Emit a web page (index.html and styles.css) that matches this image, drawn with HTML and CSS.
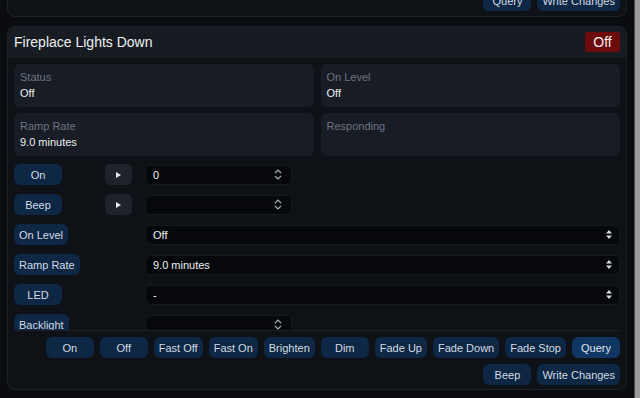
FILE: index.html
```html
<!DOCTYPE html>
<html>
	<head>
		<meta charset="UTF-8">
		<title>Fireplace Lights Down</title>
		<link rel="stylesheet" href="styles.css">
	</head>
	<body>
		<div class="screen">
		<div class="main">
			<div class="card card-prev">
				<div class="actions">
					<button class="btn">Query</button>
					<button class="btn">Write Changes</button>
				</div>
			</div>
			<div class="card">
				<div class="card-head">
					<span class="title">Fireplace Lights Down</span>
					<span class="badge">Off</span>
				</div>
				<div class="card-body">
					<div class="info">
						<div class="info-box">
							<div class="info-label">Status</div>
							<div class="info-value">Off</div>
						</div>
						<div class="info-box">
							<div class="info-label">On Level</div>
							<div class="info-value">Off</div>
						</div>
						<div class="info-box">
							<div class="info-label">Ramp Rate</div>
							<div class="info-value">9.0 minutes</div>
						</div>
						<div class="info-box">
							<div class="info-label">Responding</div>
						</div>
					</div>
					<div class="controls">
						<div class="ctl-row">
							<div class="ctl-name"><button class="btn">On</button></div>
							<button class="play"><svg width="5" height="6" viewBox="0 0 5 6"><path d="M0 0L5 3L0 6Z" fill="#e8e8e8"/></svg></button>
							<div class="field field-num">
								<span>0</span>
								<svg class="spin" width="8" height="11" viewBox="0 0 8 11"><path d="M1 4L4 1L7 4M1 7L4 10L7 7" fill="none" stroke="#a9aeb5" stroke-width="1.2"/></svg>
							</div>
						</div>
						<div class="ctl-row">
							<div class="ctl-name"><button class="btn">Beep</button></div>
							<button class="play"><svg width="5" height="6" viewBox="0 0 5 6"><path d="M0 0L5 3L0 6Z" fill="#e8e8e8"/></svg></button>
							<div class="field field-num">
								<span></span>
								<svg class="spin" width="8" height="11" viewBox="0 0 8 11"><path d="M1 4L4 1L7 4M1 7L4 10L7 7" fill="none" stroke="#a9aeb5" stroke-width="1.2"/></svg>
							</div>
						</div>
						<div class="ctl-row">
							<div class="ctl-name"><button class="btn">On Level</button></div>
							<div></div>
							<div class="field field-select">
								<span>Off</span>
								<svg class="arrows" width="6" height="9" viewBox="0 0 6 9"><path d="M3 0L6 3.5H0Z M3 9L6 5.5H0Z" fill="#d8dce0"/></svg>
							</div>
						</div>
						<div class="ctl-row">
							<div class="ctl-name"><button class="btn">Ramp Rate</button></div>
							<div></div>
							<div class="field field-select">
								<span>9.0 minutes</span>
								<svg class="arrows" width="6" height="9" viewBox="0 0 6 9"><path d="M3 0L6 3.5H0Z M3 9L6 5.5H0Z" fill="#d8dce0"/></svg>
							</div>
						</div>
						<div class="ctl-row">
							<div class="ctl-name"><button class="btn">LED</button></div>
							<div></div>
							<div class="field field-select">
								<span>-</span>
								<svg class="arrows" width="6" height="9" viewBox="0 0 6 9"><path d="M3 0L6 3.5H0Z M3 9L6 5.5H0Z" fill="#d8dce0"/></svg>
							</div>
						</div>
						<div class="ctl-row">
							<div class="ctl-name"><button class="btn">Backlight</button></div>
							<div></div>
							<div class="field field-num">
								<span></span>
								<svg class="spin" width="8" height="11" viewBox="0 0 8 11"><path d="M1 4L4 1L7 4M1 7L4 10L7 7" fill="none" stroke="#a9aeb5" stroke-width="1.2"/></svg>
							</div>
						</div>
					</div>
					<div class="actions">
						<button class="btn">On</button>
						<button class="btn">Off</button>
						<button class="btn">Fast Off</button>
						<button class="btn">Fast On</button>
						<button class="btn">Brighten</button>
						<button class="btn">Dim</button>
						<button class="btn">Fade Up</button>
						<button class="btn">Fade Down</button>
						<button class="btn">Fade Stop</button>
						<button class="btn btn-main">Query</button>
					</div>
					<div class="actions">
						<button class="btn">Beep</button>
						<button class="btn">Write Changes</button>
					</div>
				</div>
			</div>
		</div>
		<div class="gutter"></div>
		</div>
	</body>
</html>
```

FILE: styles.css
```css
html,body{
	margin: 0;
	padding: 0;
	height: 100%;
	overflow: hidden;
}
body{
	background: #0a0c10;
	font-family: "Liberation Sans", Arial, sans-serif;
	color: #e6e9ed;
}
button{
	font-family: inherit;
	border: none;
	padding: 0;
	margin: 0;
}
.screen{
	display: flex;
	height: 100%;
}
.main{
	flex: 1;
	padding: 0 7px;
}
.gutter{
	width: 5px;
	background: #9c9c9c;
	border-left: 1px solid #4a4a4a;
}
.card{
	background: #0e1116;
	border: 1px solid #1d222a;
	border-radius: 8px;
	overflow: hidden;
}
.card-prev{
	margin-top: -17px;
	margin-bottom: 9px;
	padding: 6px 6px 5px;
}
.card-head{
	display: flex;
	align-items: center;
	justify-content: space-between;
	height: 30px;
	padding: 0 6px;
	background: #171b22;
	border-bottom: 1px solid #14181e;
}
.title{
	font-size: 14px;
	color: #eef1f4;
}
.badge{
	display: inline-block;
	width: 35px;
	height: 20px;
	line-height: 20px;
	text-align: center;
	background: #6c0b0b;
	border-radius: 3px;
	font-size: 14px;
	color: #f2f2f2;
}
.card-body{
	padding: 6px 6px 4px;
}
.info{
	display: grid;
	grid-template-columns: 1fr 1fr;
	gap: 6px 7px;
}
.info-box{
	height: 43px;
	box-sizing: border-box;
	padding: 6px 6px 0;
	background: #181c24;
	border-radius: 6px;
}
.info-label{
	font-size: 11px;
	line-height: 14px;
	color: #6d7582;
}
.info-value{
	margin-top: 2px;
	font-size: 11px;
	line-height: 14px;
	color: #eceff2;
}
.controls{
	display: flex;
	flex-direction: column;
	gap: 9px;
	height: 166px;
	margin-top: 8px;
	overflow: hidden;
	border-bottom: 1px solid #1b2028;
}
.ctl-row{
	display: grid;
	grid-template-columns: 91px 40px 1fr;
	align-items: center;
	height: 21px;
	flex-shrink: 0;
}
.btn{
	height: 21px;
	min-width: 48px;
	padding: 0 5px;
	background: #0d2744;
	border-radius: 6px;
	font-size: 11px;
	color: #d3dae3;
	white-space: nowrap;
}
.btn-main{
	background: #113664;
	color: #dfe6ee;
}
.play{
	display: flex;
	align-items: center;
	justify-content: center;
	width: 27px;
	height: 21px;
	background: #1e232b;
	border-radius: 5px;
}
.field{
	display: flex;
	align-items: center;
	justify-content: space-between;
	height: 20px;
	box-sizing: border-box;
	padding: 0 9px 0 7px;
	background: #06080b;
	border: 1px solid #151a21;
	border-radius: 6px;
	font-size: 11px;
	color: #eceff2;
}
.field-num{
	width: 147px;
}
.field-select{
	padding-right: 7px;
}
.actions{
	display: flex;
	justify-content: flex-end;
	gap: 6px;
	margin-top: 6px;
}
.card-prev .actions{
	margin-top: 0;
}
```
